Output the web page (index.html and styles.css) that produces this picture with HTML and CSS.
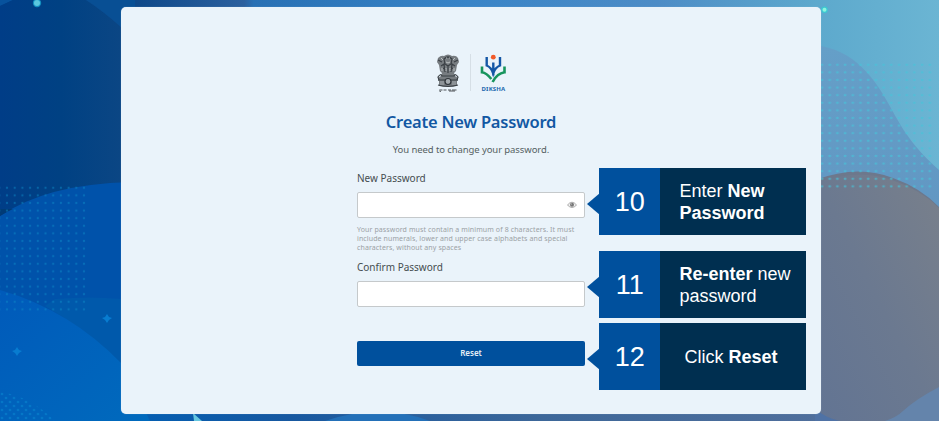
FILE: index.html
```html
<!DOCTYPE html>
<html lang="en">
<head>
<meta charset="utf-8">
<title>Create New Password</title>
<link rel="stylesheet" href="styles.css">
</head>
<body>
<svg class="backdrop" viewBox="0 0 939 421" aria-hidden="true">
  <defs>
    <linearGradient id="base" gradientUnits="userSpaceOnUse" x1="0" y1="0" x2="939" y2="0">
      <stop offset="0" stop-color="#00408a"/><stop offset=".14" stop-color="#0d4788"/><stop offset=".26" stop-color="#2c609e"/><stop offset=".27" stop-color="#2870b4"/><stop offset=".5" stop-color="#3984c7"/><stop offset=".7" stop-color="#4d8cc6"/><stop offset=".87" stop-color="#5da9cd"/><stop offset="1" stop-color="#6bb5d3"/>
    </linearGradient>
    <linearGradient id="dark" x1="0" y1="0" x2="1" y2="0"><stop offset="0" stop-color="#003d87"/><stop offset=".5" stop-color="#004183"/><stop offset="1" stop-color="#0b4684"/></linearGradient>
    <linearGradient id="foot" x1="0" y1="0" x2="1" y2="0"><stop offset="0" stop-color="#005fb5"/><stop offset=".25" stop-color="#1758a0"/><stop offset=".6" stop-color="#3d6799"/><stop offset="1" stop-color="#506f9c"/></linearGradient>
    <linearGradient id="low" x1="0" y1="0" x2="1" y2="1"><stop offset="0" stop-color="#005aba"/><stop offset="1" stop-color="#006abd"/></linearGradient>
    <linearGradient id="grey" x1="1" y1="0" x2="0" y2="1"><stop offset="0" stop-color="#79808b"/><stop offset=".5" stop-color="#6b7990"/><stop offset="1" stop-color="#627493"/></linearGradient>
    <linearGradient id="mauve" x1="0" y1="0" x2="0" y2="1"><stop offset="0" stop-color="#659fc8"/><stop offset=".5" stop-color="#6196c2"/><stop offset="1" stop-color="#6997bf"/></linearGradient>
    <pattern id="dotsL" x="-4.5" y="184" width="7.7" height="7.6" patternUnits="userSpaceOnUse"><circle cx="3.8" cy="3.8" r="1.1" fill="#0b8bc8" opacity=".5"/></pattern>
    <pattern id="dotsR" x="818" y="61" width="7.7" height="7.6" patternUnits="userSpaceOnUse"><ellipse cx="4" cy="3.8" rx="1.5" ry="1.1" fill="#46c4d9" opacity=".65"/></pattern>
    <pattern id="dotsB" x="0" y="392" width="8" height="8" patternUnits="userSpaceOnUse"><circle cx="2" cy="2" r="1.3" fill="#0884ce" opacity=".6"/><circle cx="6" cy="6" r="1.3" fill="#0884ce" opacity=".6"/></pattern>
  </defs>
  <rect width="939" height="421" fill="url(#base)"/>
  <path d="M0 0H13L0 6Z" fill="#07529d"/>
  <path d="M0 6L13 0H86Q103 11 122 28V220H0Z" fill="url(#dark)"/>
  <path d="M86 0H135V36L122 28Q103 11 86 0Z" fill="#084f94"/>
  <rect x="110" y="405" width="720" height="16" fill="url(#foot)"/>
  <path d="M325 421Q380 402 430 421Z" fill="#2370b8"/>
  <path d="M193 413L202 421H194Z" fill="#65c7e0"/>
  <path d="M0 216Q47 184 130 182V421H0Z" fill="#0052aa"/>
  <path d="M0 216Q8 211 13 209H0Z" fill="#003b76"/>
  <path d="M55 299Q90 296 122 299V366Q87 330 45 306Z" fill="#0059ab"/>
  <path d="M0 290Q70 310 122 364L150 421H0Z" fill="url(#low)"/>
  <path d="M0 184H86V311H0Z" fill="url(#dotsL)"/>
  <path d="M0 392Q30 396 55 421H0Z" fill="url(#dotsB)"/>
  <path d="M17 347L19 350 22 351 19 353 17 356 15 353 12 351 15 350ZM107 314L109 317 112 318 109 320 107 323 105 320 102 318 105 317Z" fill="#087cd0"/>
  <circle cx="37" cy="3" r="4.2" fill="#128fc0"/><circle cx="37" cy="3" r="3" fill="#5ac8df"/>
  <path d="M815 45C855 50 875 78 892 110S922 154 939 170V421H815Z" fill="url(#mauve)"/>
  <path d="M815 180Q858 164 893 178Q921 188 939 207V421H815Z" fill="#6d788c"/>
  <path d="M815 183Q858 168 892 180Q921 190 939 208V421H815Z" fill="url(#grey)"/>
  <path d="M939 387Q916 399 903 411Q897 417 885 421H939Z" fill="#6484ab"/>
  <path d="M815 409Q826 418 840 421H815Z" fill="#4f72a5"/>
  <path d="M821 61H932V190H821Z" fill="url(#dotsR)"/>
  <circle cx="824.5" cy="9.7" r="3.3" fill="#3dc9d2"/><circle cx="824.5" cy="9.7" r="2" fill="#8df5df"/>
</svg>

<main class="card">
  <form class="form">
    <div class="logos">
      <svg class="emblem" viewBox="0 0 24 38" aria-label="National emblem">
        <g fill="#777c80">
          <path d="M8 2Q12-1 16 2Q20 1 22 4L23 8L21 11L20 17L17 20H7L4 17L3 11L1 8L2 4Q5 1 8 2Z"/>
          <path d="M6 19H18L19 22L22 24V27H2V24L5 22Z"/>
          <path d="M3 27H21V32H3Z"/>
        </g>
        <path d="M8 5Q12 1 16 5L15 10L12 12L9 10ZM2 6L6 8M22 6L18 8M5 12L8 10L9 18M19 12L16 10L15 18M12 12V19M7 14L10 16M17 14L14 16" fill="none" stroke="#3b4045" stroke-width="1.2"/>
        <path d="M10 4H11M13 4H14M10 8Q12 10 14 8M5 4L7 6M19 4L17 6M10 14V17M14 14V17M6 14V17M18 14V17" fill="none" stroke="#c4c9cb" stroke-width=".9"/>
        <path d="M2 23Q5 19 6 22H18Q19 19 22 23L21 26H3ZM2 31Q12 34 22 31" fill="none" stroke="#3b4045" stroke-width="1.2"/>
        <circle cx="12" cy="27.5" r="3" fill="#a4aaae" stroke="#30353a" stroke-width="1.2"/>
        <path d="M4 28H8M16 28H20M4 30H8M16 30H20" stroke="#b8bec1" stroke-width=".7"/>
        <path d="M3.3 36H6.5M7.5 36H10.5M12 36H15M16 36H20.5M3.3 37L5 37.5M13 37H19" stroke="#4e5357" stroke-width="1"/>
      </svg>
      <span class="divider"></span>
      <div class="diksha">
        <svg class="mark" viewBox="0 0 27 29" aria-hidden="true">
          <path d="M2 12.5V18.3Q6.5 19 11.3 25M24.5 12.5V18.3Q17 19.5 12.6 28" fill="none" stroke="#17945d" stroke-width="2.6"/>
          <path d="M6.7 3V11.5Q11.5 13.5 13.2 19.5Q15 13.5 20 11.5V3M13.3 8.5V21.5" fill="none" stroke="#1457a5" stroke-width="2.4"/>
          <circle cx="13.3" cy="3.2" r="2.4" fill="#f15a29"/>
        </svg>
        <span class="brand">DIKSHA</span>
      </div>
    </div>
    <h1 class="title">Create New Password</h1>
    <p class="lead">You need to change your password.</p>
    <label class="label" for="pw">New Password</label>
    <div class="field">
      <input class="input" id="pw" type="password">
      <svg class="eye" viewBox="0 0 10 8" aria-hidden="true"><path d="M.5 4Q5-1.6 9.5 4Q5 9 .5 4Z" fill="#eee" stroke="#999" stroke-width=".8"/><circle cx="5" cy="3.7" r="2" fill="#777"/><circle cx="4.4" cy="3" r=".6" fill="#ccc"/></svg>
    </div>
    <p class="hint">Your password must contain a minimum of 8 characters. It must<br>include numerals, lower and upper case alphabets and special<br>characters, without any spaces</p>
    <label class="label" for="confirm">Confirm Password</label>
    <div class="field"><input class="input" id="confirm" type="password"></div>
    <button class="reset" type="button">Reset</button>
  </form>
</main>

<aside class="steps">
  <div class="step"><span class="num">10</span><p class="text">Enter <b>New<br>Password</b></p></div>
  <div class="step"><span class="num">11</span><p class="text"><b>Re-enter</b> new<br>password</p></div>
  <div class="step last"><span class="num">12</span><p class="text">Click <b>Reset</b></p></div>
</aside>
</body>
</html>
```
FILE: styles.css
```css
* { box-sizing: border-box; }
body {
  margin: 0;
  width: 939px;
  height: 421px;
  overflow: hidden;
  position: relative;
  padding: 6.5px 118.5px 7px 121.4px;
  font-family: "Noto Sans", sans-serif;
}
.backdrop { position: absolute; inset: 0; width: 939px; height: 421px; z-index: -1; }
.card {
  height: 407.5px;
  background: #eaf3fa;
  border-radius: 5px;
  box-shadow: 0 0 1px rgba(190, 215, 235, .6);
}
.form {
  width: 228px;
  margin-left: 235.6px;
  padding-top: 47px;
  display: flex;
  flex-direction: column;
}
.logos { display: flex; height: 40px; padding-left: 79px; }
.emblem { width: 24px; height: 38px; }
.divider { width: 1px; height: 37px; margin-left: 10px; background: #d6dfe6; }
.diksha { width: 27px; margin-left: 9px; display: flex; flex-direction: column; align-items: center; }
.mark { width: 27px; height: 29px; flex: none; }
.brand { font-size: 6px; line-height: 8px; margin-top: 2px; font-weight: 700; color: #1a68ae; white-space: nowrap; letter-spacing: .2px; }
.title { margin: 16px 0 0; font-size: 16.5px; line-height: 24px; font-weight: 600; color: #1258a3; text-align: center; white-space: nowrap; letter-spacing: -.23px; }
.lead { margin: 9px 0 0; font-size: 9.5px; line-height: 14px; text-align: center; color: #555f62; white-space: nowrap; letter-spacing: -.09px; }
.label { margin-top: 14px; font-size: 10px; line-height: 14px; color: #454d50; }
.field { position: relative; height: 26px; margin-top: 7px; }
.input { display: block; width: 100%; height: 26px; padding: 4px 24px 4px 8px; border: 1px solid #c5c9cb; border-radius: 2px; background: #fff; outline: none; }
.eye { position: absolute; right: 8px; top: 9px; width: 10px; height: 8px; }
.hint { margin: 7px 0 0; font-size: 7px; line-height: 9px; color: #9ba1a5; white-space: nowrap; letter-spacing: .11px; }
.hint + .label { margin-top: 8px; }
.reset { height: 25px; margin-top: 34px; padding: 0; border: 0; border-radius: 2px; background: #00509d; color: #e5eef6; font: 600 8px/24px "Noto Sans", sans-serif; }
.steps { position: absolute; left: 599px; top: 168px; width: 207.4px; display: flex; flex-direction: column; font-family: "Liberation Sans", sans-serif; color: #fff; }
.step { position: relative; display: flex; height: 67px; margin-bottom: 16px; background: #002f50; }
.step:nth-child(2) { margin-bottom: 5px; }
.step::before { content: ""; position: absolute; left: -12.5px; top: 24.5px; border: 11.5px solid transparent; border-left: 0; border-right: 13px solid #00509d; }
.num { width: 61.4px; background: #00509d; font-size: 27px; line-height: 68px; text-align: center; }
.text { margin: 0; padding: 12px 0 0 19px; font-size: 18px; line-height: 22px; white-space: nowrap; }
.last .text { padding: 23px 0 0 24px; }
```
